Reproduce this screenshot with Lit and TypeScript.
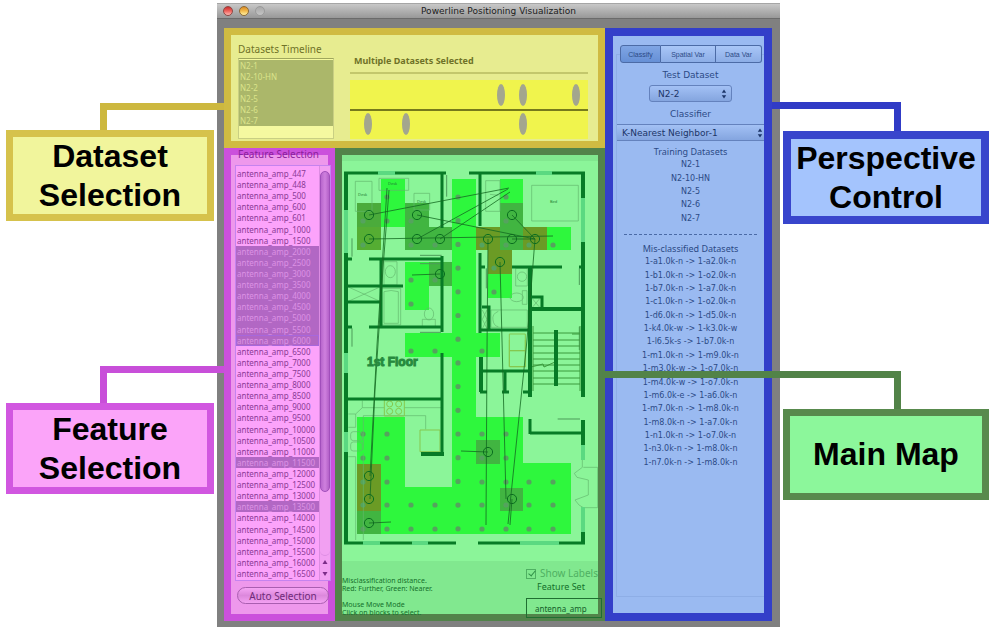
import { LitElement, html, css, svg } from "lit";
import { customElement } from "lit/decorators.js";
import { classMap } from "lit/directives/class-map.js";

const DATASETS = ["N2-1", "N2-10-HN", "N2-2", "N2-5", "N2-6", "N2-7"];
const TRAINING = ["N2-1", "N2-10-HN", "N2-5", "N2-6", "N2-7"];
const MISSED = [
  ["a1.0k-n", "a2.0k-n"], ["b1.0k-n", "o2.0k-n"], ["b7.0k-n", "a7.0k-n"], ["c1.0k-n", "o2.0k-n"],
  ["d6.0k-n", "d5.0k-n"], ["k4.0k-w", "k3.0k-w"], ["l6.5k-s", "b7.0k-n"], ["m1.0k-n", "m9.0k-n"],
  ["m3.0k-w", "o7.0k-n"], ["m4.0k-w", "o7.0k-n"], ["m6.0k-e", "a6.0k-n"], ["m7.0k-n", "m8.0k-n"],
  ["m8.0k-n", "a7.0k-n"], ["n1.0k-n", "o7.0k-n"], ["n3.0k-n", "m8.0k-n"], ["n7.0k-n", "m8.0k-n"],
];
const FEATURES = [447, 448, 500, 600, 601, 1000, 1500];
for (let f = 2000; f <= 16500; f += 500) FEATURES.push(f);
const isPicked = (f: number) => (f >= 2000 && f <= 6000) || f === 11500 || f === 13500;

/* ---- survey blocks: x, y, width, height ---- */
type Box = [number, number, number, number];
const BRIGHT: Box[] = [
  [381, 179, 24, 48], [452, 179, 24, 355], [405, 333, 95, 24], [405, 262, 24, 48],
  [500, 179, 23, 24], [547, 227, 24, 23], [488, 274, 24, 24],
  [357, 417, 48, 117], [405, 487, 48, 47], [476, 417, 47, 117], [523, 463, 48, 71],
];
const NEAR: Box[] = [
  [405, 203, 24, 24], [405, 227, 47, 23], [429, 262, 23, 24], [500, 203, 23, 47],
  [357, 511, 24, 23], [476, 440, 24, 24], [500, 488, 23, 23],
];
const MID: Box[] = [[357, 203, 24, 24]];
const OLIVE: Box[] = [[357, 227, 24, 23]];
const FAR: Box[] = [[476, 227, 24, 23], [523, 227, 24, 23], [488, 250, 24, 24], [357, 464, 24, 47]];

const DOTS: [number, number][] = [
  [387, 197], [387, 221], [363, 221], [363, 245], [411, 221], [411, 245], [435, 245], [411, 280], [411, 304], [435, 280],
  [506, 197], [506, 221], [506, 245], [482, 245], [529, 245], [553, 245], [494, 268], [494, 292],
  [411, 351], [435, 351], [482, 351],
  [363, 434], [387, 434], [363, 458], [387, 458], [363, 482], [387, 482], [363, 505], [387, 505], [363, 529], [387, 529],
  [411, 505], [435, 505], [411, 529], [435, 529],
  [482, 434], [506, 434], [482, 458], [506, 458], [482, 482], [506, 482], [529, 482], [553, 482],
  [482, 505], [506, 505], [529, 505], [553, 505], [482, 529], [506, 529], [529, 529], [553, 529],
];
for (let i = 0; i < 15; i++) DOTS.push([458, 197 + i * 23.7]);

const RINGS: [number, number][] = [
  [369, 215], [369, 239], [417, 215], [417, 239], [440, 239], [440, 274], [512, 215], [488, 239],
  [512, 239], [535, 239], [500, 262], [369, 476], [369, 499], [369, 523], [488, 452], [512, 499],
];

const boxes = (list: Box[], cls: string) =>
  list.map(([x, y, w, h]) => svg`<rect class=${cls} x=${x} y=${y} width=${w} height=${h} />`);

const arrows = html`<svg class="arrows" viewBox="0 0 6 10" aria-hidden="true">
  <path d="M3 0.5 L5.2 3.8 H0.8Z M3 9.5 L5.2 6.2 H0.8Z" />
</svg>`;

@customElement("floor-map")
export class FloorMap extends LitElement {
  static styles = css`
    :host { display: block; }
    svg { display: block; width: 100%; height: auto; background: #8bf599; }
    .bright { fill: #2ef73d; }
    .near { fill: #41b541; }
    .mid { fill: #4bab3b; }
    .olive { fill: #55ad33; }
    .far { fill: #6b9b25; }
    .dot { fill: #55a35e; }
    .wall { fill: none; stroke: #077b26; stroke-width: 4; }
    .thin-wall { stroke-width: 3; }
    .pane { fill: none; stroke: #5bd981; stroke-width: 4; }
    .thin { fill: none; stroke: #62b66d; stroke-width: 2; }
    .warm { fill: none; stroke: #86c84e; stroke-width: 3; }
    .door { fill: none; stroke: #4c9c5a; stroke-width: 3; }
    .stair { fill: none; stroke: #3a9a3c; stroke-width: 1; }
    .ring { fill: none; stroke: #0a6e20; stroke-width: 1; }
    .link { fill: none; stroke: #146a22; stroke-width: 1; opacity: 0.8; }
    .floor { font: bold 12px "Liberation Sans", sans-serif; fill: #268a3e; stroke: #268a3e; stroke-width: 1; }
    .tag { font: 4px "Noto Sans", sans-serif; fill: #1f7d35; }
  `;

  render() {
    return html`<svg viewBox="342 161 256 400" role="img" aria-label="1st Floor map">
      ${boxes(BRIGHT, "bright")} ${boxes(NEAR, "near")} ${boxes(MID, "mid")} ${boxes(OLIVE, "olive")} ${boxes(FAR, "far")}
      ${DOTS.map(([x, y]) => svg`<circle class="dot" cx=${x} cy=${y} r="2.6" />`)}

      <!-- bedrooms and bathroom, left wing -->
      <g class="thin" transform="translate(335 150) scale(0.33333)">
        <path d="M61 94H111V184H61Z M132 85H221V121H132Z M237 130H284V180H237Z" />
        <path d="M147 335H186V405H147Z M140 415H197V525H140Z M147 425Q168 418 190 425V520H147Z M262 508H301V530H262Z" />
        <ellipse cx="166" cy="365" rx="15" ry="18" /><ellipse cx="282" cy="492" rx="14" ry="18" />
        <path d="M40 411L135 454M135 411L40 454" />
        <path class="door" d="M335 75V140M255 316H320M255 341H320M51 265V320M51 535V590M255 547H318" />
      </g>
      <!-- bedroom, bathroom and closet, right wing -->
      <g class="thin" transform="translate(465 150) scale(0.33333)">
        <path d="M62 92H105V184H62Z M200 106H340V213H200Z M75 133L100 136" />
        <path d="M152 355H187V408H152Z M172 422H186V463H172Z M78 480H187V532H78Z M100 484Q80 492 84 510Q86 528 100 530" />
        <circle cx="171" cy="380" r="14" /><ellipse cx="155" cy="442" rx="20" ry="13" />
        <path d="M202 446L224 472M224 446L202 472M52 480L66 508L52 536M66 480L52 508L66 536" />
        <path class="warm" d="M133 552H181V650H133Z M133 602H181" />
        <path class="door" d="M64 355V415M343 355V405M343 530V600" />
      </g>
      <!-- kitchen -->
      <g class="thin" transform="translate(335 340) scale(0.33333)">
        <path d="M82 182V203L62 222H40M82 203H148M208 203H318M85 330V227H272V268M62 222V262H40M40 350H62V600M85 340V600" />
        <rect x="47" y="275" width="35" height="27" rx="8" /><rect x="47" y="306" width="35" height="27" rx="8" />
        <path class="warm" d="M148 180H208V228H148Z M255 270H315V335H255Z" />
        <g class="warm">
          <circle cx="164" cy="192" r="9" /><circle cx="191" cy="192" r="9" /><circle cx="164" cy="214" r="9" /><circle cx="191" cy="214" r="9" />
        </g>
      </g>
      <!-- laundry and bay -->
      <g class="thin" transform="translate(465 340) scale(0.33333)">
        <path class="warm" d="M133 0V80H181V0M133 32H181" />
        <path d="M355 382H398V503H355M352 360V382L328 400L336 412L370 420V465L330 480L342 495L355 503" />
        <path class="door" d="M278 237H345" />
      </g>
      <path class="stair" d="M533 326V391M580 326V391M533 333H580M533 340H580M533 346H580M533 353H580M533 359H580M533 365H580M533 371H580M533 378H580M533 384H580M531 367L543 364L544 367L555 362M572 334H580" />

      <path class="pane" d="M346 210V253M346 353V373M346 432V452M583 198V242M583 445V460M583 507V532" />
      <path class="pane thin-wall" d="M378 173H395M536 173H552M363 543H380M412 543H428M520 543H559" />
      <path class="wall" d="M346 172V210M346 253V353M346 373V432M346 452V544M583 172V198M583 242V397M583 420V445M583 532V544M530 267V397M556 330V386M481 357V392M421 454H444M530 309H583" />
      <path class="wall thin-wall" d="M344 173H378M395 173H446M469 173H536M552 173H585M344 543H363M380 543H412M428 543H456M478 543H520M559 543H585
        M442 173V228M442 256V332M346 259H352M369 259H443M381 259V327M346 286H403M346 302H381M346 327H352M369 327H443
        M346 399H442M442 353V456M480 172V226M480 253V333M480 267H485M512 267H562M579 267H583M531 297H542V309M480 330H530
        M482 307H489V330M481 371H530M505 371V392M480 392H487M502 392H509M523 392H530M530 433H583M530 419V434" />

      ${RINGS.map(([x, y]) => svg`<circle class="ring" cx=${x} cy=${y} r="4.6" />`)}
      <path class="link" d="M369 215L509 188M417 215L535 239M417 239L508 189M440 239L510 192M369 239L553 236M512 215L535 239M512 239H535
        M440 274L412 275M369 523L391 522M488 239L487 350L486 525M500 262L502 340L506 499M535 239L527 340L508 524M512 499L510 525M488 452L461 451
        M387 188L382 268L377 345L370 476M389 190L383 268L375 390L370 499" />
      <text class="tag" x="358" y="196">Desk</text>
      <text class="tag" x="388" y="185">Desk</text>
      <text class="tag" x="417" y="203">Desk</text>
      <text class="tag" x="550" y="203">Bed</text>
      <text class="floor" x="367" y="366">1st Floor</text>
    </svg>`;
  }
}

@customElement("app-root")
export class AppRoot extends LitElement {
  static styles = css`
    :host { display: block; background: #fff; font-family: "Noto Sans", sans-serif; }
    * { box-sizing: border-box; }
    ul, p, h1, h2, h3 { margin: 0; padding: 0; list-style: none; font-weight: normal; }
    .page { display: grid; grid-template-columns: 217fr 563fr 219fr; padding-bottom: 6px; overflow: hidden; }

    /* callouts */
    .side { display: flex; flex-direction: column; position: relative; z-index: 1; }
    .left { padding: 103px 3px 0 6px; }
    .right { padding: 102px 10px 0 3px; }
    .callout { display: flex; align-items: center; justify-content: center; height: 91px; border: 7px solid; text-align: center;
      color: #000; font: bold 32px/39px "Liberation Sans", sans-serif; }
    .callout.yellow { background: #f1f59c; border-color: #d6c24c; }
    .callout.pink { background: #fba4f9; border-color: #d157e0; }
    .callout.blue { background: #a4c4fd; border: 8px solid #3845cc; height: 93px; }
    .callout.green { background: #8cf79b; border-color: #588a4d; }
    .wire { border: 0 solid; border-top-width: 7px; flex: none; }
    .left .wire { border-left-width: 7px; margin: 0 -10px 0 94px; height: 27px; }
    .right .wire { border-right-width: 7px; margin: 0 88px 0 -11px; height: 29px; }
    .wire.yellow { border-color: #cdb83f; }
    .left .wire.pink { border-color: #c84fd9; margin-top: 145px; height: 37px; }
    .wire.blue { border-color: #303bc6; }
    .right .wire.green { border-color: #528348; margin: 147px 88px 0 -88%; height: 38px; }

    /* window frame */
    .window { margin-top: 3px; background: #808080; }
    .titlebar { display: flex; align-items: center; height: 16px; padding: 0 6px; background: linear-gradient(#c8c8c8, #989898); border-top: 1px solid #a6a6a6; border-bottom: 1px solid #6b6b6b; }
    .lights { display: flex; gap: 6px; flex: 1; }
    .light { width: 10px; height: 10px; border-radius: 50%; border: 1px solid #555; }
    .light.red { background: linear-gradient(#c9302f, #f0625c 50%, #ffb9b2); border-color: #8f4743; }
    .light.amber { background: linear-gradient(#d98a26, #f3bb4c 50%, #fff2a4); border-color: #8e6a35; }
    .light.off { background: linear-gradient(#a9a9a9, #c4c4c4); border-color: #9b9b9b; }
    .title { font: 9px/14px "DejaVu Sans", sans-serif; color: #1c1c1c; }
    .spacer { flex: 1; }
    .panels { display: grid; grid-template-columns: 111fr 270fr 167fr; grid-template-rows: 120px 473px; padding: 9px 8px 6px 7px; }
    .panel { border: 7px solid; min-width: 0; min-height: 0; }
    .legend { font-size: 10px; line-height: 12px; white-space: nowrap; }

    /* datasets */
    .data { grid-column: 1 / 3; background: #e7ec90; border-color: #d0bb42; color: #6f7228; padding: 8px 10px 3px 7px; display: grid; grid-template-columns: 96px 1fr; column-gap: 16px; }
    .data .legend { margin-bottom: 3px; }
    .rows { display: grid; grid-auto-rows: 1fr; font-size: 8px; }
    .rows li { display: flex; align-items: center; line-height: 11px; min-height: 0; padding-left: 1px; white-space: nowrap; }
    .list { height: 81px; padding: 1px 0 12px; background: #f5f9a0; border: 1px solid #c9cf83; border-top-color: #9fa65c; }
    .list li { background: #abb76a; color: #dbe48b; }
    .multi { font-size: 9px; font-weight: bold; line-height: 12px; padding: 12px 0 5px 4px; border-bottom: 2px solid #c3c76c; }
    .timeline { display: block; width: 100%; height: 59px; margin-top: 6px; background: #f0f44d; }
    .mark { fill: #a3a68e; }
    .axis { stroke: #767a1c; stroke-width: 2; }

    /* features */
    .features { background: #ee98ec; border-color: #cb50dc; color: #8a3a95; display: flex; flex-direction: column; }
    .features .legend { margin: -7px 0 5px 7px; color: #8b1f9c; }
    .scroller { display: grid; grid-template-columns: 1fr 11px; height: 416px; margin: 0 -3px 0 4px; border: 1px solid #c583ef; background: #fca3fb; }
    .scroller .rows { padding: 2px 0 1px; }
    .scroller li.picked { background: #b267c4; color: #dd92e4; }
    .scroller li.last { box-shadow: inset 0 0 0 1px #a767dd; }
    .bar { display: flex; flex-direction: column; background: #f2a0f2; border-left: 1px solid #dc8ce2; padding-top: 5px; }
    .thumb { height: 321px; border-radius: 5px; background: linear-gradient(90deg, #b866cd, #cf80de 50%, #b360c8); border: 1px solid #a14fbb; }
    .track { flex: 1; border-bottom: 1px solid #dc8ce2; border-radius: 0 0 5px 5px; }
    .step { height: 12px; width: 10px; display: block; fill: #7b2c87; }
    .auto { height: 17px; margin: 6px -1px 0 6px; padding: 0; border-radius: 9px; border: 1px solid #a95eb0; background: linear-gradient(#f5a5f4, #dc88dc 50%, #f3a1f2);
      font: 10px/14px "Noto Sans", sans-serif; color: #6e2a78; white-space: nowrap; }

    /* map */
    .map { background: #81e88f; border-color: #52834a; display: flex; flex-direction: column; color: #14702b; }
    .map floor-map { margin-top: 6px; }
    .foot { display: flex; justify-content: space-between; }
    .notes { font-size: 7px; line-height: 8px; font-weight: 600; padding-top: 16px; white-space: nowrap; }
    .notes p + p { margin-top: 8px; }
    .fset { display: flex; flex-direction: column; width: 76px; margin-right: -4px; padding-top: 6px; }
    .show { display: flex; align-items: center; gap: 4px; font-size: 10px; line-height: 13px; color: #4fb062; white-space: nowrap; }
    .check { appearance: none; margin: 0; width: 10px; height: 10px; border: 1px solid #4fb062; background: transparent; position: relative; }
    .check::after { content: ""; position: absolute; left: 3px; top: -1px; width: 3px; height: 6px; border: solid #2f9147; border-width: 0 1px 1px 0; transform: rotate(40deg); }
    .fname { font-size: 9px; line-height: 14px; text-align: center; padding-right: 6px; }
    .field { width: 76px; height: 20px; margin-top: 4px; padding: 0 8px; border: 1px solid #1f6f31; background: transparent; font: 8px "Noto Sans", sans-serif; color: #14602a; flex: none; }

    /* perspective */
    .control { grid-column: 3; grid-row: 1 / 3; background: #9abaf1; border: 8px solid #333fc9; color: #2c4a86; padding: 9px 0 0 3px; text-align: center; display: flex; flex-direction: column; }
    .tabs { display: grid; grid-template-columns: 41fr 55fr 46fr; margin: 0 2px -9px 4px; height: 18px; z-index: 1; }
    .tab { border: 1px solid #4c6ba6; border-left-width: 0; padding: 0; background: linear-gradient(#a9c6f7, #8cade6); font: 7px "Liberation Sans", sans-serif; color: #2c4a86; white-space: nowrap; }
    .tab:first-child { border-left-width: 1px; border-radius: 3px 0 0 3px; }
    .tab:last-child { border-radius: 0 3px 3px 0; }
    .tab.on { background: linear-gradient(#7fa5e4, #6690d6); }
    .sheet { border: 1px solid #8eaee6; border-right: 0; height: 543px; padding-top: 14px; display: flex; flex-direction: column; }
    .sheet h3, .sheet label { font-size: 9px; line-height: 12px; display: block; }
    .sheet label { font-family: "DejaVu Sans", sans-serif; }
    .pick { position: relative; display: flex; align-items: center; }
    .pick.small { width: 83px; margin: 4px auto 6px; }
    .pick.wide { margin: 4px 0 5px; }
    .pick select { appearance: none; width: 100%; height: 17px; margin: 0; padding: 0 8px; border: 1px solid #6482bd; border-radius: 3px; background: linear-gradient(#a3c1f5, #84a5df); font: 9px "DejaVu Sans", sans-serif; color: #1c3568; }
    .pick.wide select { border-width: 1px 0; border-radius: 0; padding: 0 5px; }
    .arrows { position: absolute; right: 5px; width: 6px; height: 10px; fill: #1c3568; }
    .pick.wide .arrows { right: 1px; }
    .rows.center { font-family: "DejaVu Sans", sans-serif; }
    .rows.center li { justify-content: center; padding: 0; }
    .training { height: 67px; }
    .missed { height: 214px; }
    .rule { border-top: 1px dashed #4a6aa6; margin: 9px 7px 8px; }
  `;

  private wire(color: string) {
    return html`<div class="wire ${color}"></div>`;
  }

  private timeline() {
    const marks = [[151, 15], [173, 15], [226, 15], [18, 44], [56, 44], [173, 44]];
    return html`<svg class="timeline" viewBox="0 0 238 59" preserveAspectRatio="none" aria-hidden="true">
      ${marks.map(([x, y]) => svg`<ellipse class="mark" cx=${x} cy=${y} rx="4" ry="11" />`)}
      <line class="axis" x1="0" y1="30" x2="238" y2="30" />
    </svg>`;
  }

  render() {
    return html`<main class="page">
      <aside class="side left">
        ${this.wire("yellow")}
        <h2 class="callout yellow">Dataset<br />Selection</h2>
        ${this.wire("pink")}
        <h2 class="callout pink">Feature<br />Selection</h2>
      </aside>

      <section class="window">
        <header class="titlebar">
          <div class="lights"><span class="light red"></span><span class="light amber"></span><span class="light off"></span></div>
          <h1 class="title">Powerline Positioning Visualization</h1>
          <div class="spacer"></div>
        </header>
        <div class="panels">
          <section class="panel data">
            <div>
              <h2 class="legend">Datasets Timeline</h2>
              <ul class="rows list" role="listbox" aria-label="Datasets">
                ${DATASETS.map((d) => html`<li role="option" aria-selected="true">${d}</li>`)}
              </ul>
            </div>
            <div>
              <h3 class="multi">Multiple Datasets Selected</h3>
              ${this.timeline()}
            </div>
          </section>

          <section class="panel features">
            <h2 class="legend">Feature Selection</h2>
            <div class="scroller">
              <ul class="rows" role="listbox" aria-label="Features">
                ${FEATURES.map((f) => html`<li role="option" aria-selected=${isPicked(f)} class=${classMap({ picked: isPicked(f), last: f === 6000 })}>antenna_amp_${f}</li>`)}
              </ul>
              <div class="bar">
                <div class="thumb"></div>
                <div class="track"></div>
                <svg class="step" viewBox="0 0 10 12"><path d="M5 4L7.5 8H2.5Z" /></svg>
                <svg class="step" viewBox="0 0 10 12"><path d="M5 8L7.5 4H2.5Z" /></svg>
              </div>
            </div>
            <button class="auto">Auto Selection</button>
          </section>

          <section class="panel map">
            <floor-map></floor-map>
            <div class="foot">
              <div class="notes">
                <p>Misclassification distance.<br />Red: Further, Green: Nearer.</p>
                <p>Mouse Move Mode<br />Click on blocks to select.</p>
              </div>
              <div class="fset">
                <label class="show"><input class="check" type="checkbox" checked />Show Labels</label>
                <label class="fname" for="fs">Feature Set</label>
                <input class="field" id="fs" type="text" value="antenna_amp" />
              </div>
            </div>
          </section>

          <section class="panel control">
            <div class="tabs" role="tablist">
              <button class="tab on" role="tab" aria-selected="true">Classify</button>
              <button class="tab" role="tab">Spatial Var</button>
              <button class="tab" role="tab">Data Var</button>
            </div>
            <div class="sheet">
              <label for="test">Test Dataset</label>
              <div class="pick small"><select id="test"><option>N2-2</option></select>${arrows}</div>
              <label for="cls">Classifier</label>
              <div class="pick wide"><select id="cls"><option>K-Nearest Neighbor-1</option></select>${arrows}</div>
              <h3>Training Datasets</h3>
              <ul class="rows center training">${TRAINING.map((t) => html`<li>${t}</li>`)}</ul>
              <div class="rule"></div>
              <h3>Mis-classified Datasets</h3>
              <ul class="rows center missed">${MISSED.map(([a, b]) => html`<li>1-${a} -&gt; 1-${b}</li>`)}</ul>
            </div>
          </section>
        </div>
      </section>

      <aside class="side right">
        ${this.wire("blue")}
        <h2 class="callout blue">Perspective<br />Control</h2>
        ${this.wire("green")}
        <h2 class="callout green">Main Map</h2>
      </aside>
    </main>`;
  }
}
